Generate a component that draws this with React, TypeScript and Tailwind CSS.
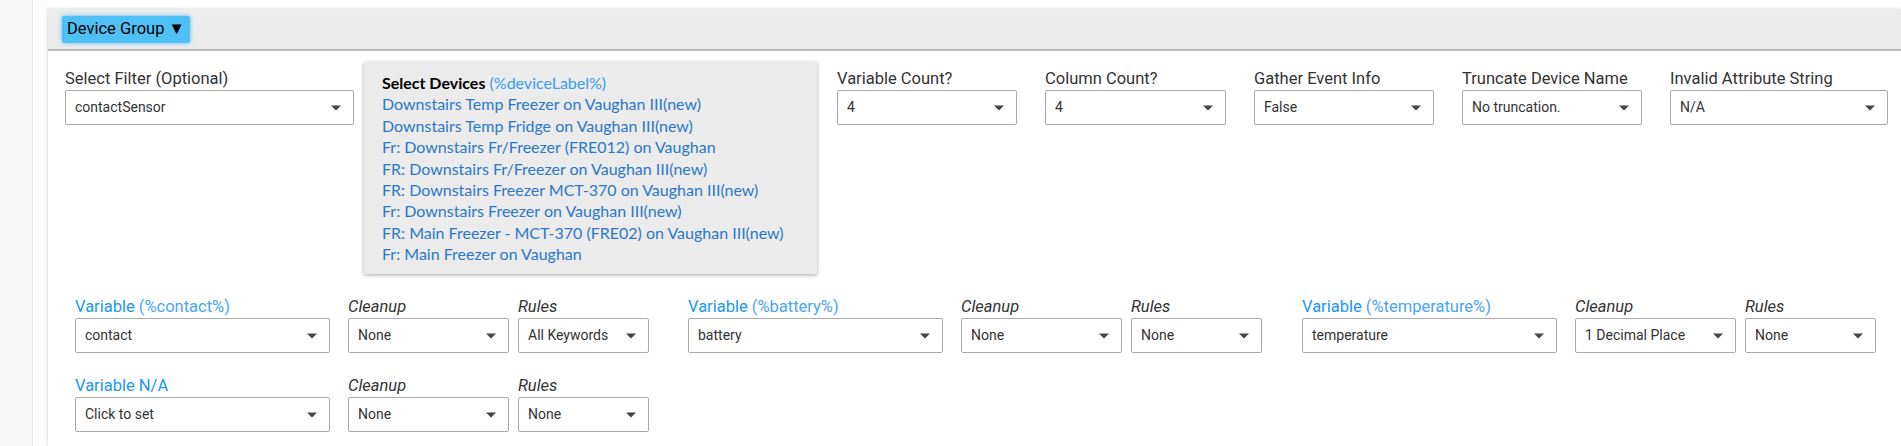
import React from "react";

function Arrow() {
  return (
    <span className="absolute right-[12px] top-1/2 -translate-y-1/2 w-0 h-0 border-l-[5px] border-r-[5px] border-t-[5px] border-l-transparent border-r-transparent border-t-[#444]" />
  );
}

function SelectBox({ value, width }: { value: string; width: string }) {
  return (
    <div
      className={`relative h-[35px] ${width} border border-[#a9a9a9] rounded-[2px] bg-white flex items-center pl-[9px] text-[14px] text-[#333]`}
    >
      <span>{value}</span>
      <Arrow />
    </div>
  );
}

function Field({
  label,
  value,
  width,
  className = "",
}: {
  label: React.ReactNode;
  value: string;
  width: string;
  className?: string;
}) {
  return (
    <div className={`flex flex-col ${className}`}>
      <div className="h-[22px] leading-[22px] text-[16.5px] text-[#333] whitespace-nowrap">{label}</div>
      <SelectBox value={value} width={width} />
    </div>
  );
}

function VarLabel({ main, sub }: { main: string; sub?: string }) {
  return (
    <span>
      <span className="text-[#2196f3]">{main}</span>
      {sub ? <span className="text-[#4aa5f5]"> {sub}</span> : null}
    </span>
  );
}

function Group({
  varLabel,
  varValue,
  cleanup,
  rules,
  className = "",
}: {
  varLabel: React.ReactNode;
  varValue: string;
  cleanup: string;
  rules: string;
  className?: string;
}) {
  return (
    <div className={`flex ${className}`}>
      <Field label={varLabel} value={varValue} width="w-[255px]" className="mr-[18px]" />
      <Field label={<span className="italic">Cleanup</span>} value={cleanup} width="w-[161px]" className="mr-[9px]" />
      <Field label={<span className="italic">Rules</span>} value={rules} width="w-[131px]" />
    </div>
  );
}

const devices = [
  "Downstairs Temp Freezer on Vaughan III(new)",
  "Downstairs Temp Fridge on Vaughan III(new)",
  "Fr: Downstairs Fr/Freezer (FRE012) on Vaughan",
  "FR: Downstairs Fr/Freezer on Vaughan III(new)",
  "FR: Downstairs Freezer MCT-370 on Vaughan III(new)",
  "Fr: Downstairs Freezer on Vaughan III(new)",
  "FR: Main Freezer - MCT-370 (FRE02) on Vaughan III(new)",
  "Fr: Main Freezer on Vaughan",
];

export default function App() {
  return (
    <div className="w-[1901px] h-[446px] overflow-hidden flex bg-white font-['Roboto',sans-serif]">
      <div className="w-[33px] shrink-0 bg-[#f6f6f6] border-r border-[#ececec]" />
      <div className="w-[15px] shrink-0 bg-[#fcfcfc]" />
      <div className="flex-1 mt-[9px] bg-white shadow-[0_0_3px_rgba(0,0,0,0.18)]">
        {/* header */}
        <div className="h-[42px] bg-[#ebebeb] border-b-2 border-[#bcbcbc] pl-[14px] pt-[7px]">
          <div className="inline-flex items-center h-[27px] px-[5px] bg-[#4fc0f5] shadow-[0_0_4px_#4fc0f5] text-[16.5px] text-black rounded-[2px]">
            Device Group ▼
          </div>
        </div>
        {/* row 1 */}
        <div className="flex items-start pl-[17px]">
          <Field
            label="Select Filter (Optional)"
            value="contactSensor"
            width="w-[289px]"
            className="mt-[17px]"
          />
          <div className="ml-[10px] mt-[11px] w-[453px] h-[212px] bg-[#ebebeb] shadow-[0_1px_4px_rgba(0,0,0,0.35)] pl-[18px] pt-[10px] font-['Lato',sans-serif] text-[16px] leading-[21.4px]">
            <div>
              <span className="font-bold text-black">Select Devices</span>{" "}
              <span className="text-[#3a9cf0]">(%deviceLabel%)</span>
            </div>
            {devices.map((d) => (
              <div key={d} className="text-[#2b78c8] whitespace-nowrap">
                {d}
              </div>
            ))}
          </div>
          <Field label="Variable Count?" value="4" width="w-[180px]" className="mt-[17px] ml-[20px]" />
          <Field label="Column Count?" value="4" width="w-[181px]" className="mt-[17px] ml-[28px]" />
          <Field label="Gather Event Info" value="False" width="w-[180px]" className="mt-[17px] ml-[28px]" />
          <Field label="Truncate Device Name" value="No truncation." width="w-[180px]" className="mt-[17px] ml-[28px]" />
          <Field label="Invalid Attribute String" value="N/A" width="w-[218px]" className="mt-[17px] ml-[28px]" />
        </div>
        {/* row 2 */}
        <div className="flex pl-[27px] mt-[22px]">
          <Group
            varLabel={<VarLabel main="Variable" sub="(%contact%)" />}
            varValue="contact"
            cleanup="None"
            rules="All Keywords"
            className="w-[613px]"
          />
          <Group
            varLabel={<VarLabel main="Variable" sub="(%battery%)" />}
            varValue="battery"
            cleanup="None"
            rules="None"
            className="w-[614px]"
          />
          <Group
            varLabel={<VarLabel main="Variable" sub="(%temperature%)" />}
            varValue="temperature"
            cleanup="1 Decimal Place"
            rules="None"
          />
        </div>
        {/* row 3 */}
        <div className="flex pl-[27px] mt-[22px]">
          <Group
            varLabel={<VarLabel main="Variable N/A" />}
            varValue="Click to set"
            cleanup="None"
            rules="None"
          />
        </div>
      </div>
    </div>
  );
}
